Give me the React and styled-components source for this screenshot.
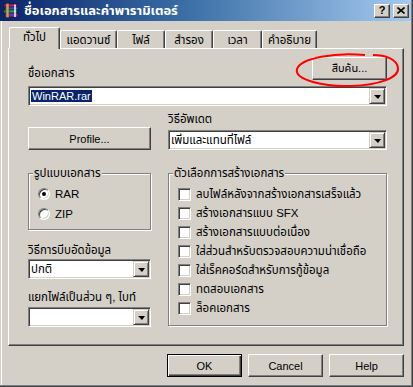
import React from "react";
import styled, { createGlobalStyle, css } from "styled-components";

const FONT = `"Liberation Sans", "Noto Sans Thai", "Noto Sans Thai UI", Tahoma, Loma, Garuda, "DejaVu Sans", sans-serif`;

const GlobalStyle = createGlobalStyle`
	html, body {
		margin: 0;
		padding: 0;
		background: #d4d0c8;
	}
	body {
		font-family: ${FONT};
		font-size: 11.5px;
		color: #000;
	}
`;

// window chrome
const Window = styled.div`
	width: 413px;
	height: 387px;
	box-sizing: border-box;
	padding: 0 2px 2px 0;
	background: #d4d0c8;
	box-shadow: inset -1px -1px #404040, inset -2px -2px #808080, inset 1px 0 #d4d0c8, inset 2px 0 #fff;
	display: flex;
	flex-direction: column;
	overflow: hidden;
`;

const TitleBar = styled.div`
	height: 21px;
	flex: none;
	display: flex;
	align-items: center;
	padding: 0 2px 0 3px;
	background: linear-gradient(90deg, #0a246a 0%, #3a6ea5 45%, #a6caf0 100%);
`;

const TitleText = styled.span`
	margin-left: 5px;
	color: #fff;
	font-weight: bold;
	font-size: 13px;
	white-space: nowrap;
`;

const TitleButtons = styled.div`
	margin-left: auto;
	display: flex;
	gap: 3px;
`;

const CaptionButton = styled.div`
	width: 16px;
	height: 14px;
	box-sizing: border-box;
	background: #d4d0c8;
	border: 1px solid;
	border-color: #fff #404040 #404040 #fff;
	box-shadow: inset -1px -1px #808080;
	display: flex;
	align-items: center;
	justify-content: center;
	font-weight: bold;
	font-size: 11px;
	line-height: 1;
`;

const Body = styled.div`
	flex: 1;
	display: flex;
	flex-direction: column;
	padding: 6px 7px 0 8px;
`;

// tabs
const TabStrip = styled.div`
	position: relative;
	z-index: 1;
	height: 21px;
	display: flex;
	align-items: flex-end;
	padding-left: 1px;
`;

const Tab = styled.div`
	width: ${(p) => p.$w}px;
	height: 18px;
	box-sizing: border-box;
	background: #d4d0c8;
	border-top: 1px solid #fff;
	border-left: 1px solid #fff;
	border-right: 1px solid #404040;
	box-shadow: inset -1px 0 #808080;
	border-radius: 2px 2px 0 0;
	display: flex;
	align-items: center;
	justify-content: center;
	padding-top: 1px;
	white-space: nowrap;

	${(p) =>
		p.$active &&
		css`
			height: 22px;
			margin-bottom: -1px;
			padding-top: 0;
			padding-bottom: 2px;
		`}
`;

const Panel = styled.div`
	height: 298px;
	box-sizing: border-box;
	border: 1px solid;
	border-color: #fff #404040 #404040 #fff;
	box-shadow: inset -1px -1px #808080;
	padding: 9px 16px 0 19px;
	display: flex;
	flex-direction: column;
`;

const TopRow = styled.div`
	height: 22px;
	display: flex;
	align-items: flex-end;
	justify-content: space-between;
`;

const Label = styled.div`
	line-height: 14px;
	height: 14px;
	white-space: nowrap;
	margin-top: ${(p) => p.$mt || 0}px;
`;

const Columns = styled.div`
	display: grid;
	grid-template-columns: 123px 219px;
	column-gap: 17px;
	align-items: ${(p) => p.$align || "start"};
	margin-top: ${(p) => p.$mt || 0}px;
`;

const Column = styled.div`
	display: flex;
	flex-direction: column;
`;

// buttons
const PushButton = styled.button`
	width: ${(p) => (p.$w ? `${p.$w}px` : "100%")};
	height: 23px;
	box-sizing: border-box;
	margin: 0;
	padding: 0;
	background: #d4d0c8;
	font-family: ${FONT};
	font-size: 11px;
	color: #000;
	border: 1px solid;
	border-color: #fff #404040 #404040 #fff;
	box-shadow: inset -1px -1px #808080;
	display: flex;
	align-items: center;
	justify-content: center;

	${(p) =>
		p.$default &&
		css`
			border-color: #000;
			box-shadow: inset 1px 1px #fff, inset -1px -1px #404040, inset -2px -2px #808080;
		`}
`;

const Highlight = styled.div`
	position: relative;
`;

const RedMark = styled.svg`
	position: absolute;
	left: -17px;
	top: -4px;
	pointer-events: none;
	overflow: visible;
`;

// combo box
const Combo = styled.div`
	height: 20px;
	box-sizing: border-box;
	margin-top: ${(p) => p.$mt || 0}px;
	background: #fff;
	border: 1px solid;
	border-color: #808080 #fff #fff #808080;
	box-shadow: inset 1px 1px #404040, inset -1px -1px #d4d0c8;
	display: flex;
	align-items: center;
`;

const ComboText = styled.div`
	flex: 1;
	padding-left: 2px;
	line-height: 14px;
	white-space: nowrap;
	overflow: hidden;
`;

const Selected = styled.span`
	background: #0a246a;
	color: #fff;
	padding: 0 1px;
	font-size: 11px;
`;

const DropButton = styled.div`
	width: 16px;
	height: 16px;
	margin: 0 1px 0 0;
	box-sizing: border-box;
	background: #d4d0c8;
	border: 1px solid;
	border-color: #d4d0c8 #404040 #404040 #d4d0c8;
	box-shadow: inset 1px 1px #fff, inset -1px -1px #808080;
	display: flex;
	align-items: center;
	justify-content: center;

	&::after {
		content: "";
		border-left: 4px solid transparent;
		border-right: 3px solid transparent;
		border-top: 4px solid #000;
		margin-top: 1px;
	}
`;

// group boxes
const GroupBox = styled.div`
	position: relative;
	height: ${(p) => p.$h}px;
	box-sizing: border-box;
	border: 1px solid #808080;
	box-shadow: inset 1px 1px #fff, 1px 1px #fff;
	padding: ${(p) => p.$pt}px 0 0 9px;
	display: flex;
	flex-direction: column;
`;

const GroupCaption = styled.span`
	position: absolute;
	top: -8px;
	left: 4px;
	padding: 0 1px;
	background: #d4d0c8;
	line-height: 14px;
	white-space: nowrap;
`;

const OptionRow = styled.div`
	height: ${(p) => p.$h}px;
	display: flex;
	align-items: center;
	gap: 5px;
	white-space: nowrap;
`;

const Radio = styled.span`
	width: 12px;
	height: 12px;
	box-sizing: border-box;
	border-radius: 50%;
	background: #fff;
	border: 1px solid;
	border-color: #808080 #fff #fff #808080;
	box-shadow: inset 1px 1px #404040, inset -1px -1px #d4d0c8;
	display: flex;
	align-items: center;
	justify-content: center;

	&::after {
		content: "";
		width: 4px;
		height: 4px;
		border-radius: 50%;
		background: ${(p) => (p.$checked ? "#000" : "transparent")};
	}
`;

const Check = styled.span`
	width: 13px;
	height: 13px;
	flex: none;
	box-sizing: border-box;
	background: #fff;
	border: 1px solid;
	border-color: #808080 #fff #fff #808080;
	box-shadow: inset 1px 1px #404040, inset -1px -1px #d4d0c8;
`;

const ButtonRow = styled.div`
	margin-top: 8px;
	display: flex;
	justify-content: flex-end;
	gap: 6px;
`;

const TABS = [
	{ label: "ทั่วไป", w: 51 },
	{ label: "แอดวานซ์", w: 57 },
	{ label: "ไฟล์", w: 48 },
	{ label: "สำรอง", w: 48 },
	{ label: "เวลา", w: 49 },
	{ label: "คำอธิบาย", w: 55 },
];

const OPTIONS = [
	"ลบไฟล์หลังจากสร้างเอกสารเสร็จแล้ว",
	"สร้างเอกสารแบบ SFX",
	"สร้างเอกสารแบบต่อเนื่อง",
	"ใส่ส่วนสำหรับตรวจสอบความน่าเชื่อถือ",
	"ใส่เร็คคอร์ดสำหรับการกู้ข้อมูล",
	"ทดสอบเอกสาร",
	"ล็อคเอกสาร",
];

function RarIcon() {
	return (
		<svg width="16" height="16" viewBox="0 0 16 16">
			<rect x="1" y="1" width="13" height="3" fill="#c0206a" stroke="#400020" strokeWidth="0.6" />
			<rect x="2" y="4" width="13" height="3" fill="#3050d0" stroke="#101850" strokeWidth="0.6" />
			<rect x="1" y="7" width="13" height="3" fill="#20a050" stroke="#0a3a18" strokeWidth="0.6" />
			<rect x="2" y="10" width="13" height="4" fill="#7030b0" stroke="#200a40" strokeWidth="0.6" />
			<rect x="11" y="1.5" width="2" height="12.5" fill="#f0f0f0" opacity="0.8" />
			<rect x="3" y="0.5" width="3" height="14" fill="#c8a050" stroke="#503010" strokeWidth="0.5" />
		</svg>
	);
}

function CloseGlyph() {
	return (
		<svg width="8" height="7" viewBox="0 0 8 7">
			<path d="M0.5 0.5 L7.5 6.5 M7.5 0.5 L0.5 6.5" stroke="#000" strokeWidth="1.6" />
		</svg>
	);
}

export default function App() {
	return (
		<>
			<GlobalStyle />
			<Window>
				<TitleBar>
					<RarIcon />
					<TitleText>ชื่อเอกสารและค่าพารามิเตอร์</TitleText>
					<TitleButtons>
						<CaptionButton>?</CaptionButton>
						<CaptionButton>
							<CloseGlyph />
						</CaptionButton>
					</TitleButtons>
				</TitleBar>

				<Body>
					<TabStrip>
						{TABS.map((t, i) => (
							<Tab key={t.label} $w={t.w} $active={i === 0}>
								{t.label}
							</Tab>
						))}
					</TabStrip>

					<Panel>
						<TopRow>
							<Label>ชื่อเอกสาร</Label>
							<Highlight>
								<PushButton $w={75}>สืบค้น...</PushButton>
								<RedMark width="106" height="36" viewBox="0 0 106 36">
									<path
										d="M70 2 C40 -1 6 5 2 16 C-1 27 30 34 56 33 C84 32 104 25 103 15 C102 6 90 2 78 2"
										fill="none"
										stroke="#f00"
										strokeWidth="2"
									/>
								</RedMark>
							</Highlight>
						</TopRow>

						<Combo $mt={6}>
							<ComboText>
								<Selected>WinRAR.rar</Selected>
							</ComboText>
							<DropButton />
						</Combo>

						<Columns $align="end" $mt={6}>
							<PushButton>Profile...</PushButton>
							<Column>
								<Label>วิธีอัพเดต</Label>
								<Combo $mt={4}>
									<ComboText>เพิ่มและแทนที่ไฟล์</ComboText>
									<DropButton />
								</Combo>
							</Column>
						</Columns>

						<Columns $mt={23}>
							<Column>
								<GroupBox $h={57} $pt={10}>
									<GroupCaption>รูปแบบเอกสาร</GroupCaption>
									<OptionRow $h={20}>
										<Radio $checked />
										RAR
									</OptionRow>
									<OptionRow $h={20}>
										<Radio />
										ZIP
									</OptionRow>
								</GroupBox>
								<Label $mt={13}>วิธีการบีบอัดข้อมูล</Label>
								<Combo $mt={2}>
									<ComboText>ปกติ</ComboText>
									<DropButton />
								</Combo>
								<Label $mt={11}>แยกไฟล์เป็นส่วน ๆ, ไบท์</Label>
								<Combo $mt={3}>
									<ComboText />
									<DropButton />
								</Combo>
							</Column>

							<GroupBox $h={153} $pt={11}>
								<GroupCaption>ตัวเลือกการสร้างเอกสาร</GroupCaption>
								{OPTIONS.map((o) => (
									<OptionRow key={o} $h={19}>
										<Check />
										{o}
									</OptionRow>
								))}
							</GroupBox>
						</Columns>
					</Panel>

					<ButtonRow>
						<PushButton $w={75} $default>
							OK
						</PushButton>
						<PushButton $w={75}>Cancel</PushButton>
						<PushButton $w={75}>Help</PushButton>
					</ButtonRow>
				</Body>
			</Window>
		</>
	);
}
